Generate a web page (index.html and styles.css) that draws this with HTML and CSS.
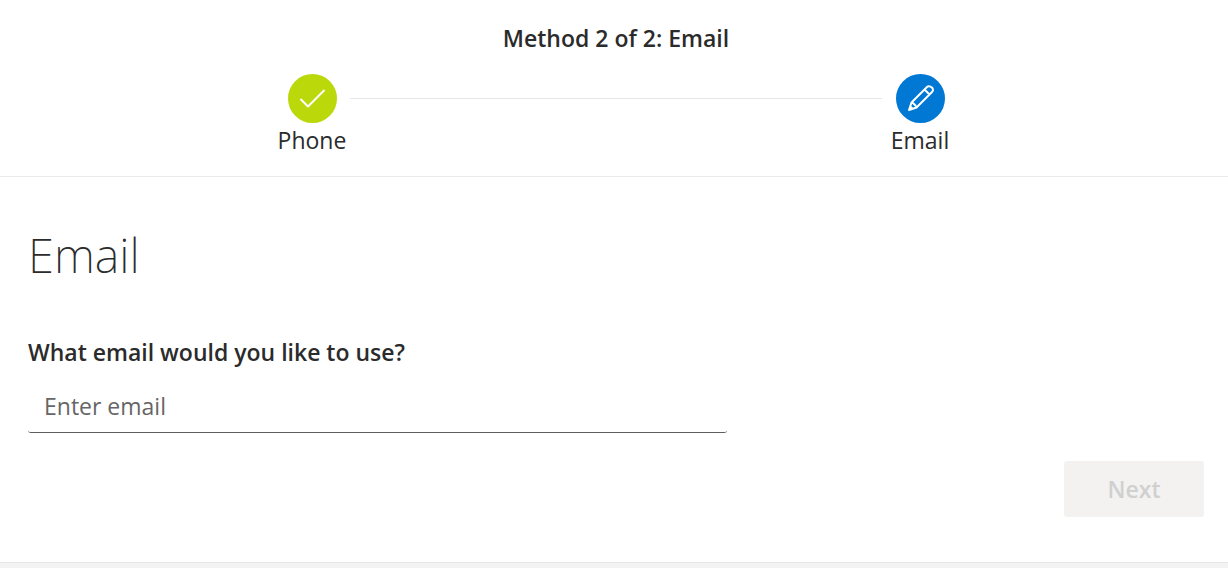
FILE: index.html
```html
<!DOCTYPE html>
<html lang="en">
<head>
<meta charset="utf-8">
<meta name="viewport" content="width=device-width, initial-scale=1">
<title>Email</title>
<link rel="stylesheet" href="styles.css">
</head>
<body>
<main class="card">
  <header class="progress">
    <h1 class="progress-title">Method 2 of 2: Email</h1>
    <ol class="steps">
      <li class="step">
        <span class="step-icon step-done">
          <svg viewBox="0 0 49 49" aria-hidden="true"><path d="M12.500 25l7.500 7.500 16.500-16.500"/></svg>
        </span>
        <span class="step-label">Phone</span>
      </li>
      <li class="step-line" aria-hidden="true"></li>
      <li class="step" aria-current="step">
        <span class="step-icon step-current">
          <svg viewBox="0 0 49 49" aria-hidden="true"><path d="M13 36L15.500 28.500L31 13C32.800 11.200 36.700 13.200 37 15.500C37.200 16.500 36.600 17.400 36 18L20.500 33.500ZM15.500 28.500C17.500 29 20 31.500 20.500 33.500M28.500 15.500L33.500 20.500M13 36L14.200 32.500L16.500 34.800Z"/></svg>
        </span>
        <span class="step-label">Email</span>
      </li>
    </ol>
  </header>
  <form class="form">
    <h2 class="form-title">Email</h2>
    <label class="form-label" for="email">What email would you like to use?</label>
    <input class="form-input" id="email" type="email" placeholder="Enter email">
    <button class="next" type="submit" disabled>Next</button>
  </form>
</main>
</body>
</html>
```
FILE: styles.css
```css
* {
  box-sizing: border-box;
}

body {
  margin: 0;
  min-height: 100vh;
  background: #f3f3f3;
  color: #2b2b2b;
  font: 400 23px/32px "Open Sans", "Noto Sans", sans-serif;
}

.card {
  background: #fff;
  border-bottom: 1px solid #e6e6e6;
}

.progress {
  padding: 22px 24px 20px 28px;
  border-bottom: 1px solid #eaeaea;
}

.progress-title {
  margin: 0 0 20px;
  font-size: 23px;
  font-weight: 600;
  text-align: center;
}

.steps {
  display: flex;
  max-width: 684px;
  margin: 0 auto;
  padding: 0;
  list-style: none;
}

.step {
  display: flex;
  flex: none;
  flex-direction: column;
  align-items: center;
  gap: 1px;
  width: 76px;
}

.step-icon {
  width: 49px;
  height: 49px;
  border-radius: 50%;
}

.step-icon svg {
  display: block;
  fill: none;
  stroke: #fff;
  stroke-width: 2;
  stroke-linejoin: round;
}

.step-done {
  background: #bad80a;
}

.step-current {
  background: #0078d4;
}

.step-line {
  flex: 1;
  height: 1px;
  margin-top: 24px;
  background: #e6e6e6;
}

.form {
  display: flex;
  flex-direction: column;
  padding: 46px 24px 45px 28px;
}

.form-title {
  margin: 0 0 49px;
  font-family: "Noto Sans", "Open Sans", sans-serif;
  font-size: 47px;
  font-weight: 200;
  line-height: 64px;
}

.form-label {
  margin-bottom: 11px;
  font-weight: 600;
}

.form-input {
  width: 100%;
  max-width: 699px;
  height: 54px;
  padding: 0 16px;
  border: 0;
  border-bottom: 1px solid #605e5c;
  border-radius: 3px;
  background: transparent;
  color: inherit;
  font: inherit;
}

.form-input::placeholder {
  color: #666;
  opacity: 1;
}

.next {
  align-self: flex-end;
  width: 140px;
  height: 56px;
  margin-top: 28px;
  padding: 0;
  border: 0;
  border-radius: 3px;
  background: #f3f2f1;
  color: #d0d0d0;
  font: inherit;
  font-weight: 600;
}
```
